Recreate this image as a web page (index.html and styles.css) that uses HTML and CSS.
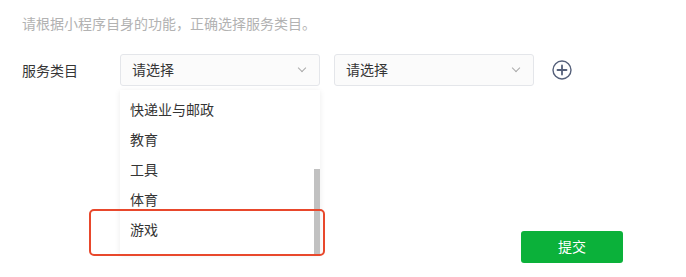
FILE: index.html
```html
<!doctype html>
<html>
	<head>
		<meta http-equiv="Content-Type" content="text/html; charset=utf-8">
		<title>服务类目</title>
		<link rel="stylesheet" href="styles.css">
	</head>
<body>

	<!--category start-->
	<div id="cate">
		<p class="c_tip">请根据小程序自身的功能，正确选择服务类目。</p>
		<div class="c_row">
			<label class="c_label">服务类目</label>
			<div class="c_select c_open">
				<span>请选择</span>
				<i class="c_arrow"></i>
				<div class="c_drop">
					<ul>
						<li>快递业与邮政</li>
						<li>教育</li>
						<li>工具</li>
						<li>体育</li>
						<li>游戏</li>
					</ul>
					<b class="c_bar"></b>
				</div>
				<div class="c_mark"></div>
			</div>
			<div class="c_select">
				<span>请选择</span>
				<i class="c_arrow"></i>
			</div>
			<a class="c_add" href="javascript:;">
				<svg width="20" height="20" viewBox="0 0 20 20">
					<circle cx="10" cy="10" r="9" fill="none" stroke="#55607a" stroke-width="1.4"/>
					<path d="M10 5.5v9M5.5 10h9" stroke="#55607a" stroke-width="1.8" stroke-linecap="round"/>
				</svg>
			</a>
		</div>
		<div class="c_foot">
			<a class="c_btn" href="javascript:;">提交</a>
		</div>
	</div>
	<!--end category-->

</body>
</html>
```

FILE: styles.css
```css
*{margin:0;padding:0;}
body{font-size:14px;font-family:"Noto Sans CJK SC","Liberation Sans",sans-serif;color:#353535;background:#fff;}
ul{list-style:none;}
a{text-decoration:none;}

/*cate start*/
#cate{padding:11px 0 0 22px;}
#cate .c_tip{line-height:24px;color:#b2b2b2;}
#cate .c_row{display:flex;align-items:center;margin-top:19px;height:32px;}
#cate .c_label{width:98px;line-height:31px;color:#353535;}
#cate .c_select{position:relative;width:200px;height:32px;box-sizing:border-box;border:1px solid #e4e6ea;border-radius:3px;background:#fbfbfb;padding-left:11px;line-height:29px;margin-right:14px;}
#cate .c_arrow{position:absolute;right:14px;top:10px;width:5px;height:5px;border-right:1px solid #aaa;border-bottom:1px solid #aaa;transform:rotate(45deg);}
#cate .c_drop{position:absolute;left:-1px;top:35px;width:200px;height:164px;background:#fff;box-shadow:0 1px 6px rgba(0,0,0,.08);overflow:hidden;z-index:2;}
#cate .c_drop ul{padding-top:4px;}
#cate .c_drop li{height:30px;line-height:30px;padding-left:10px;}
#cate .c_bar{position:absolute;right:0;top:79px;width:6px;height:85px;background:#c1c1c1;}
#cate .c_mark{position:absolute;left:-32px;top:154px;width:236px;height:47px;box-sizing:border-box;border:2px solid #e8482c;border-radius:5px;z-index:3;}
#cate .c_add{display:block;width:20px;height:20px;margin-left:4px;}
#cate .c_add svg{display:block;}
#cate .c_foot{display:flex;padding:145px 0 0 499px;}
#cate .c_btn{display:block;width:102px;height:32px;line-height:31px;text-align:center;color:#fff;background:#0bb13a;border-radius:3px;}
/*end cate*/
```
